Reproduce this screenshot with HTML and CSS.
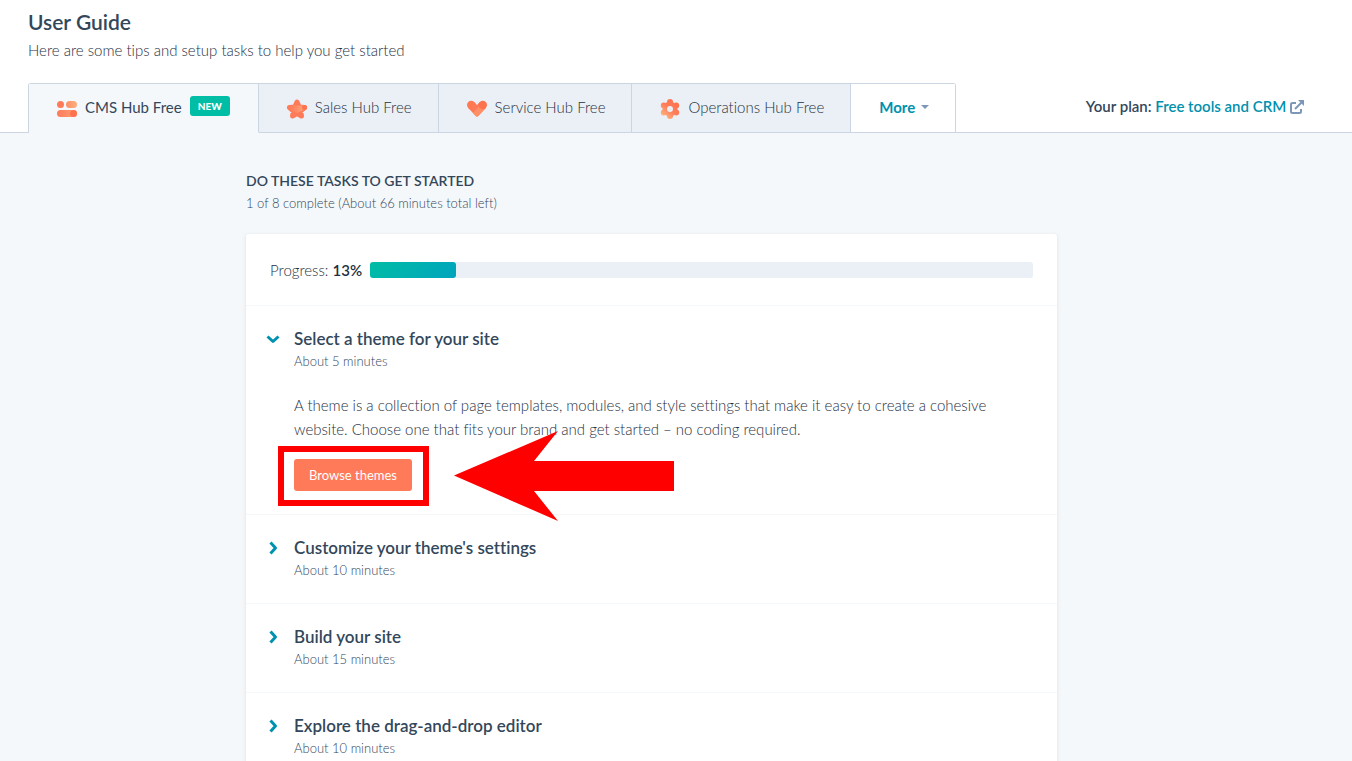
FILE: index.html
```html
<!DOCTYPE html>
<html lang="en">

<head>
    <meta charset="UTF-8">
    <meta name="viewport" content="width=device-width, initial-scale=1.0">
    <title>User Guide</title>
    <link rel="stylesheet" href="styles.css">
</head>

<body>
    <svg class="defs" width="0" height="0" aria-hidden="true">
        <defs>
            <linearGradient id="light" x1="0" y1="0" x2="1" y2="0">
                <stop offset="0" stop-color="#ff8f66" />
                <stop offset="1" stop-color="#fbb07f" />
            </linearGradient>
            <linearGradient id="fade" x1="0" y1="0" x2="1" y2="0">
                <stop offset="0" stop-color="#ff7a59" />
                <stop offset="1" stop-color="#fca377" />
            </linearGradient>
            <linearGradient id="gear" gradientUnits="userSpaceOnUse" x1="16" y1="3" x2="4" y2="17">
                <stop offset="0" stop-color="#ff7350" />
                <stop offset="0.5" stop-color="#ff7d5a" />
                <stop offset="1" stop-color="#fdae7c" />
            </linearGradient>
        </defs>
    </svg>

    <header class="header">
        <h1>User Guide</h1>
        <p class="intro">Here are some tips and setup tasks to help you get started</p>

        <div class="nav-row">
            <nav class="tabs">
                <a class="tab active" href="#cms">
                    <svg class="hub-icon" viewBox="0 0 20 20">
                        <circle cx="3.5" cy="5.5" r="3.5" fill="#ff7a59" />
                        <rect x="9" y="2" width="11" height="7" rx="3.5" fill="url(#light)" />
                        <rect x="0" y="11" width="20" height="7" rx="3.5" fill="url(#fade)" />
                        <circle cx="16.5" cy="14.5" r="3.5" fill="#ff7250" />
                    </svg>
                    <span>CMS Hub Free</span>
                    <span class="badge">NEW</span>
                </a>
                <a class="tab" href="#sales">
                    <svg class="hub-icon" viewBox="0 0 20 20">
                        <path d="M10 3L12.200 8L17.500 8.500L13.500 12L14.500 17L10 14.500L5.500 17L6.500 12L2.500 8.500L7.800 8Z" fill="#ff7a59" stroke="#ff7a59" stroke-width="5" stroke-linejoin="round" />
                        <path d="M2.500 8.500H17.500L10 12Z" fill="url(#fade)" stroke="url(#fade)" stroke-width="4" stroke-linejoin="round" />
                        <circle cx="17.500" cy="8.500" r="2.500" fill="#ff7250" />
                    </svg>
                    <span>Sales Hub Free</span>
                </a>
                <a class="tab" href="#service">
                    <svg class="hub-icon" viewBox="0 0 20 20">
                        <path d="M1.200 9L7.200 3L10 6L12.800 3L18.800 9L11.200 17Q10 18 8.800 17Z" fill="#ff7a59" />
                        <path d="M14 5L18.800 9L11.200 17Q10 18 8.800 17L6 14Z" fill="#ff8f66" />
                        <circle cx="4.200" cy="6" r="4.200" fill="#ff7955" />
                        <circle cx="15.800" cy="6" r="4.200" fill="#ff7250" />
                    </svg>
                    <span>Service Hub Free</span>
                </a>
                <a class="tab" href="#operations">
                    <svg class="hub-icon" viewBox="0 0 20 20">
                        <g fill="url(#gear)">
                            <circle cx="10" cy="10" r="7.500" />
                            <circle cx="10" cy="3" r="3" />
                            <circle cx="16.200" cy="6.500" r="3" />
                            <circle cx="16.200" cy="13.500" r="3" />
                            <circle cx="10" cy="17" r="3" />
                            <circle cx="3.800" cy="13.500" r="3" />
                            <circle cx="3.800" cy="6.500" r="3" />
                        </g>
                        <circle cx="10" cy="10" r="3" fill="#eaf0f6" />
                    </svg>
                    <span>Operations Hub Free</span>
                </a>
                <button class="tab more" type="button">More <span class="caret"></span></button>
            </nav>
            <p class="plan">Your plan:
                <a href="#plan">Free tools and CRM
                    <svg class="external" viewBox="0 0 14 14">
                        <path d="M6 3H2.500Q1 3 1 4.500V11.500Q1 13 2.500 13H9.500Q11 13 11 11.500V9" />
                        <path d="M5 9L11.500 2.500" />
                        <path class="tip" d="M8 0H14V6Z" />
                    </svg>
                </a>
            </p>
        </div>
    </header>

    <main class="main">
        <div class="content">
            <h2 class="section-title">DO THESE TASKS TO GET STARTED</h2>
            <p class="summary">1 of 8 complete (About 66 minutes total left)</p>

            <div class="card">
                <div class="progress-row">
                    <span>Progress: <b>13%</b></span>
                    <div class="bar" role="progressbar" aria-label="Progress" aria-valuenow="13" aria-valuemin="0" aria-valuemax="100">
                        <div class="bar-fill" style="width: 13%"></div>
                    </div>
                </div>

                <section class="task">
                    <button class="toggle" type="button" aria-expanded="true">
                        <svg class="chevron open" viewBox="0 0 14 14"><path d="M4.500 1.500L9.500 7L4.500 12.500" /></svg>
                        Select a theme for your site
                    </button>
                    <p class="time">About 5 minutes</p>
                    <div class="details">
                        <p>A theme is a collection of page templates, modules, and style settings that make it easy to create a cohesive website. Choose one that fits your brand and get started – no coding required.</p>
                        <div class="action">
                            <button class="browse" type="button">Browse themes</button>
                            <span class="highlight"></span>
                            <svg class="arrow" viewBox="0 0 220 90">
                                <path d="M0 44.500L104 0L80 30H220V60H80L104 90Z" fill="#ff0000" />
                            </svg>
                        </div>
                    </div>
                </section>

                <section class="task">
                    <button class="toggle" type="button" aria-expanded="false">
                        <svg class="chevron" viewBox="0 0 14 14"><path d="M4.500 1.500L9.500 7L4.500 12.500" /></svg>
                        Customize your theme's settings
                    </button>
                    <p class="time">About 10 minutes</p>
                </section>

                <section class="task">
                    <button class="toggle" type="button" aria-expanded="false">
                        <svg class="chevron" viewBox="0 0 14 14"><path d="M4.500 1.500L9.500 7L4.500 12.500" /></svg>
                        Build your site
                    </button>
                    <p class="time">About 15 minutes</p>
                </section>

                <section class="task">
                    <button class="toggle" type="button" aria-expanded="false">
                        <svg class="chevron" viewBox="0 0 14 14"><path d="M4.500 1.500L9.500 7L4.500 12.500" /></svg>
                        Explore the drag-and-drop editor
                    </button>
                    <p class="time">About 10 minutes</p>
                </section>
            </div>
        </div>
    </main>
</body>

</html>
```

FILE: styles.css
```css
* {
    box-sizing: border-box;
}

body {
    margin: 0;
    height: 100vh;
    overflow: hidden;
    font-family: Lato, "Liberation Sans", sans-serif;
    font-size: 15px;
    font-weight: 300;
    font-variant-ligatures: none;
    line-height: 24px;
    color: #1f3042;
    background-color: #f5f8fa;
}

h1,
h2,
p {
    margin: 0;
}

b {
    font-weight: 600;
}

button {
    font-family: inherit;
    font-variant-ligatures: none;
    cursor: pointer;
}

.defs {
    position: absolute;
}

.header {
    padding: 8px 48px 0 28px;
    background-color: white;
    border-bottom: 1px solid #cbd6e2;
}

h1 {
    font-size: 21px;
    font-weight: 600;
    line-height: 28px;
    color: #33475b;
}

.intro {
    margin-top: 2px;
}

.nav-row {
    display: flex;
    justify-content: space-between;
    margin-top: 21px;
}

.tabs {
    display: flex;
    margin-bottom: -1px;
    border: 1px solid #cbd6e2;
    border-bottom: none;
    border-radius: 3px 3px 0 0;
}

.tab {
    display: flex;
    align-items: center;
    height: 49px;
    padding: 0 26px 2px 28px;
    color: #1f3042;
    text-decoration: none;
    white-space: nowrap;
    background-color: #eaf0f6;
    border: none;
    border-right: 1px solid #cbd6e2;
    border-bottom: 1px solid #cbd6e2;
}

.tab.active {
    padding-right: 28px;
    font-weight: 400;
    color: #33475b;
    background-color: #f5f8fa;
    border-bottom-color: #f5f8fa;
}

.tab.more {
    font-size: 15px;
    font-weight: 700;
    color: #0091ae;
    background-color: white;
    border-right: none;
}

.hub-icon {
    width: 20px;
    height: 20px;
    margin: 4px 8px 0 0;
}

.badge {
    height: 20px;
    margin: 0 0 2px 8px;
    padding: 0 8px;
    font-size: 10px;
    font-weight: 900;
    line-height: 20px;
    color: white;
    background-color: #00bda5;
    border-radius: 3px;
}

.caret {
    margin-left: 6px;
    border: 4px solid transparent;
    border-top-color: #7c98b6;
    border-bottom: none;
}

.plan {
    padding-top: 11px;
    font-weight: 600;
    color: #33475b;
    white-space: nowrap;
}

.plan a {
    color: #0091ae;
    text-decoration: none;
}

.external {
    width: 14px;
    height: 14px;
    vertical-align: -2px;
    fill: none;
    stroke: #7c98b6;
    stroke-width: 2;
}

.external .tip {
    fill: #7c98b6;
    stroke: none;
}

.main {
    padding: 36px 49px 0 0;
}

.content {
    max-width: 811px;
    margin: 0 auto;
}

.section-title {
    font-size: 14px;
    font-weight: 600;
    line-height: 24px;
    color: #33475b;
}

.summary,
.time {
    font-size: 13px;
    line-height: 20px;
    color: #33475b;
}

.card {
    margin-top: 21px;
    background-color: white;
    border-radius: 3px;
    box-shadow: 0 1px 4px rgba(45, 62, 80, 0.12);
}

.progress-row {
    display: flex;
    align-items: center;
    gap: 8px;
    height: 71px;
    padding: 0 24px;
}

.bar {
    flex: 1;
    height: 16px;
    background-color: #eaf0f6;
    border-radius: 3px;
}

.bar-fill {
    height: 100%;
    background: linear-gradient(135deg, #00bda5, #00a4bd);
    border-radius: 3px;
}

.task {
    padding: 21px 48px 23px;
    border-top: 1px solid #f5f8fa;
}

.toggle {
    display: flex;
    align-items: center;
    margin-left: -28px;
    padding: 0;
    font-size: 17px;
    font-weight: 600;
    line-height: 24px;
    color: #33475b;
    background: none;
    border: none;
}

.chevron {
    width: 14px;
    height: 14px;
    margin-right: 14px;
    fill: none;
    stroke: #0091ae;
    stroke-width: 3;
    stroke-linejoin: round;
}

.chevron.open {
    transform: rotate(90deg);
}

.details {
    margin-top: 22px;
}

.action {
    position: relative;
    width: max-content;
    margin-top: 18px;
}

.browse {
    display: block;
    height: 32px;
    padding: 0 15px;
    font-size: 13px;
    color: white;
    background-color: #ff7a59;
    border: none;
    border-radius: 3px;
}

/* callout drawn over the task */
.highlight {
    position: absolute;
    inset: -13px -17px -15px -16px;
    border: 6px solid #ff0000;
}

.arrow {
    position: absolute;
    top: -28px;
    left: 160px;
    width: 220px;
    height: 90px;
}
```
